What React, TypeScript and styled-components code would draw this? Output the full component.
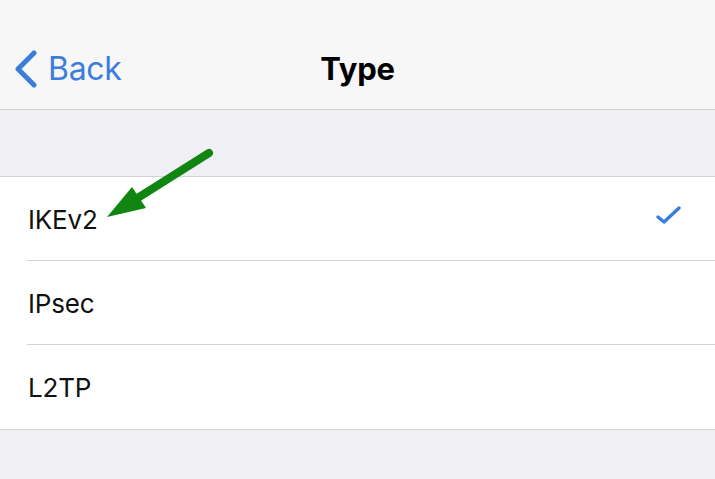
import styled, { createGlobalStyle } from 'styled-components'

const Global = createGlobalStyle`
    html, body {
        margin: 0;
        padding: 0;
        background: #efeff4;
        font-family: Inter, "Noto Sans", "Liberation Sans", sans-serif;
        -webkit-font-smoothing: antialiased;
    }
`

const Screen = styled.div`
    width: 715px;
    height: 479px;
    overflow: hidden;
    position: relative;
    background: #efeff4;
`

const NavBar = styled.header`
    height: 110px;
    background: #f7f7f8;
    border-bottom: 1px solid #d1d1d6;
    box-sizing: border-box;
    display: grid;
    grid-template-columns: 1fr auto 1fr;
    align-items: center;
    padding-top: 28px;
`

const BackButton = styled.div`
    display: flex;
    align-items: center;
    gap: 10px;
    padding-left: 14px;
    color: #3b7ddd;
    font-size: 32px;
    letter-spacing: -0.3px;
`

const Title = styled.h1`
    margin: 0;
    font-size: 31px;
    font-weight: 700;
    color: #000;
    letter-spacing: -0.2px;
`

const Spacer = styled.div<{ $h: number }>`
    height: ${p => p.$h}px;
`

const List = styled.ul`
    list-style: none;
    margin: 0;
    padding: 0;
    background: #fff;
    border-top: 1px solid #d1d1d6;
    border-bottom: 1px solid #d1d1d6;
`

const Row = styled.li`
    height: 84px;
    padding-left: 28px;
    display: flex;
    align-items: center;
    box-sizing: border-box;
    position: relative;

    &:not(:last-child)::after {
        content: '';
        position: absolute;
        left: 27px;
        right: 0;
        bottom: 0;
        height: 1px;
        background: #d1d1d6;
    }
`

const Label = styled.span`
    flex: 1;
    font-size: 26px;
    color: #111;
    letter-spacing: -0.2px;
`

const Check = styled.svg`
    width: 30px;
    height: 24px;
    margin-right: 30px;
    margin-top: -2px;
`

const Arrow = styled.svg`
    position: absolute;
    left: 0;
    top: 0;
    pointer-events: none;
`

const types = ['IKEv2', 'IPsec', 'L2TP']

function App() {
    return (
        <Screen>
            <Global />
            <NavBar>
                <BackButton>
                    <svg width="24" height="38" viewBox="0 0 24 38">
                        <path d="M20 3 L4 19 L20 35" fill="none" stroke="#3b7ddd" strokeWidth="5" strokeLinecap="round" strokeLinejoin="round" />
                    </svg>
                    Back
                </BackButton>
                <Title>Type</Title>
                <div />
            </NavBar>
            <Spacer $h={66} />
            <List>
                {types.map((t, i) => (
                    <Row key={t}>
                        <Label>{t}</Label>
                        {i === 0 && (
                            <Check viewBox="0 0 30 24">
                                <path d="M3 11 L9 16 L24 2" fill="none" stroke="#3b7ddd" strokeWidth="3.4" strokeLinecap="round" strokeLinejoin="round" />
                            </Check>
                        )}
                    </Row>
                ))}
            </List>
            <Arrow width="715" height="479" viewBox="0 0 715 479">
                <line x1="209" y1="153" x2="136" y2="199" stroke="#118511" strokeWidth="8" strokeLinecap="round" />
                <polygon points="107,217 132,187 146,208" fill="#118511" />
            </Arrow>
        </Screen>
    )
}

export default App
